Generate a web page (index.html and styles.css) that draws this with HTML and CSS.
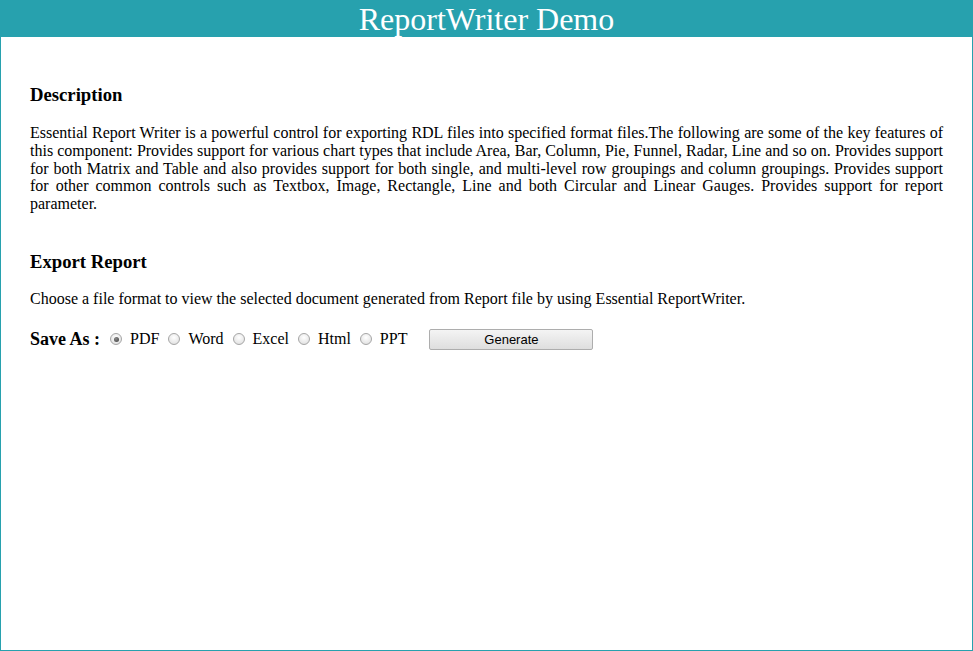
FILE: index.html
```html
<!DOCTYPE html>
<html>
<head>
<meta charset="utf-8">
<link rel="stylesheet" href="styles.css">
</head>
<body>
<div class="frame">
  <div class="header">ReportWriter Demo</div>
  <div class="content">
    <h3 class="heading">Description</h3>
    <p class="desc">Essential Report Writer is a powerful control for exporting RDL files into specified format files.The following are some of the key features of this component: Provides support for various chart types that include Area, Bar, Column, Pie, Funnel, Radar, Line and so on. Provides support for both Matrix and Table and also provides support for both single, and multi-level row groupings and column groupings. Provides support for other common controls such as Textbox, Image, Rectangle, Line and both Circular and Linear Gauges. Provides support for report parameter.</p>
    <h3 class="heading export">Export Report</h3>
    <p class="choose">Choose a file format to view the selected document generated from Report file by using Essential ReportWriter.</p>
    <div class="saveas">
      <span class="label">Save As :</span>
      <label class="opt"><input type="radio" name="fmt" checked>PDF</label>
      <label class="opt"><input type="radio" name="fmt">Word</label>
      <label class="opt"><input type="radio" name="fmt">Excel</label>
      <label class="opt"><input type="radio" name="fmt">Html</label>
      <label class="opt"><input type="radio" name="fmt">PPT</label>
      <button class="gen">Generate</button>
    </div>
  </div>
</div>
</body>
</html>
```
FILE: styles.css
```css
html, body { margin: 0; padding: 0; }
body { font-family: "Liberation Serif", "Times New Roman", serif; color: #000; background: #fff; }
.frame {
  box-sizing: border-box;
  width: 973px;
  height: 651px;
  border: 1px solid #27a1ae;
  border-top: none;
}
.header {
  background: #27a1ae;
  color: #fff;
  height: 37px;
  line-height: 38px;
  text-align: center;
  font-size: 32px;
  margin: 0 -1px;
}
.content { padding: 47px 29px 0 29px; }
.heading { font-size: 18.7px; font-weight: bold; margin: 0; line-height: 22px; }
.desc {
  font-size: 16px;
  line-height: 17.75px;
  text-align: justify;
  margin: 18px 0 0 0;
}
.export { margin-top: 38px; }
.choose { font-size: 16px; margin: 17px 0 0 0; line-height: 18px; }
.saveas { display: flex; align-items: center; margin-top: 21px; font-size: 16px; height: 21px; }
.label { font-weight: bold; font-size: 18px; margin-right: 10px; }
.opt { display: flex; align-items: center; margin-right: 9px; }
.opt input {
  appearance: none;
  -webkit-appearance: none;
  margin: 0 8px 0 0;
  width: 12px;
  height: 12px;
  border-radius: 50%;
  border: 1px solid #a6a6a6;
  background: radial-gradient(circle at 50% 35%, #ffffff 0%, #e6e6e6 70%, #d6d6d6 100%);
  box-sizing: border-box;
  position: relative;
}
.opt input:checked::after {
  content: "";
  position: absolute;
  left: 2.5px;
  top: 2.5px;
  width: 5px;
  height: 5px;
  border-radius: 50%;
  background: radial-gradient(circle at 40% 35%, #8a8a8a, #3c3c3c);
}
.gen {
  margin-left: 13px;
  width: 164px;
  height: 21px;
  font-family: "Liberation Sans", Arial, sans-serif;
  font-size: 13px;
  border: 1px solid #adadad;
  border-radius: 2px;
  background: linear-gradient(#f4f4f4, #dedede);
  color: #000;
  padding: 0;
}
```
